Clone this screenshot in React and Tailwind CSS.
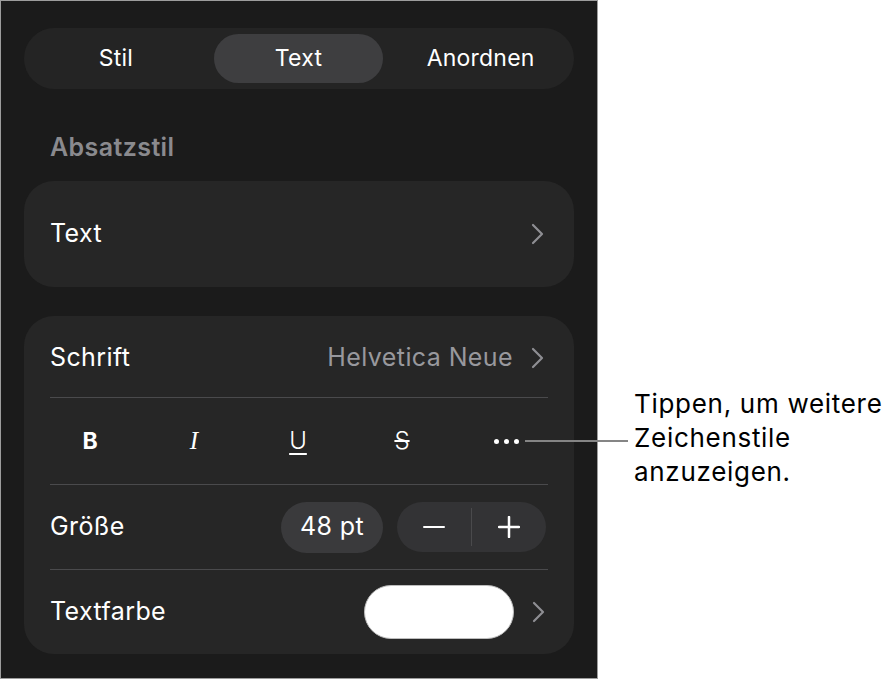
import React from "react";

function Chevron() {
  return (
    <svg width="13" height="22" viewBox="0 0 13 22" fill="none" className="shrink-0">
      <path d="M2 2 L11 11 L2 20" stroke="#8e8e93" strokeWidth="2.2" strokeLinecap="round" strokeLinejoin="round" />
    </svg>
  );
}

function Divider() {
  return <div className="mx-[26px] h-px bg-[#4a4a4c]" />;
}

export default function App() {
  const tabs = [
    { label: "Stil", w: "w-[190px] pr-[6px]" },
    { label: "Text", w: "w-[170px]", active: true },
    { label: "Anordnen", w: "w-[191px] pl-[4px]" },
  ];

  return (
    <div className="relative flex min-h-screen bg-white font-['Inter','Liberation_Sans',sans-serif]">
      {/* format panel */}
      <div className="flex h-[679px] w-[598px] shrink-0 flex-col border border-[#9d9d9d] bg-[#1b1b1b] px-[23px] pt-[27px] text-white">
        <div className="flex h-[61px] items-center rounded-full bg-[#242424]">
          {tabs.map((t) => (
            <div
              key={t.label}
              className={`${t.w} flex h-[49px] items-center justify-center rounded-full text-[23px] tracking-[0.2px] ${
                t.active ? "bg-[#3e3e40]" : ""
              }`}
            >
              {t.label}
            </div>
          ))}
        </div>

        <div className="mt-[44px] h-[28px] pl-[26px] text-[25px] font-semibold leading-[28px] tracking-[0.4px] text-[#8a8a8e]">
          Absatzstil
        </div>

        <div className="mt-[20px] flex h-[106px] items-center justify-between rounded-[30px] bg-[#262626] pl-[26px] pr-[30px] text-[25px] tracking-[0.4px]">
          <span>Text</span>
          <Chevron />
        </div>

        <div className="mt-[29px] flex h-[338px] flex-col rounded-[30px] bg-[#262626] text-[25px] tracking-[0.4px]">
          <div className="flex h-[81px] items-center justify-between pl-[26px] pr-[30px] pt-[2px]">
            <span>Schrift</span>
            <div className="flex items-center gap-[18px]">
              <span className="text-[#98989d]">Helvetica Neue</span>
              <Chevron />
            </div>
          </div>
          <Divider />
          <div className="flex h-[86px] items-center pl-[14px] tracking-normal">
            <div className="flex w-[104px] justify-center text-[23px] font-bold">B</div>
            <div className="flex w-[104px] justify-center font-['Liberation_Serif',serif] text-[25px] italic">I</div>
            <div className="flex w-[104px] justify-center text-[24px] font-light underline decoration-[1.5px] underline-offset-[4px]">
              U
            </div>
            <div className="flex w-[104px] justify-center text-[24px] font-light line-through decoration-[1.5px]">S</div>
            <div className="flex w-[104px] items-center justify-center gap-[5px]">
              <span className="h-[5px] w-[5px] rounded-full bg-white" />
              <span className="h-[5px] w-[5px] rounded-full bg-white" />
              <span className="h-[5px] w-[5px] rounded-full bg-white" />
            </div>
          </div>
          <Divider />
          <div className="flex h-[84px] items-center justify-between pl-[26px] pr-[28px]">
            <span>Größe</span>
            <div className="flex items-center gap-[14px]">
              <div className="flex h-[51px] w-[102px] items-center justify-center rounded-full bg-[#3a3a3c]">48 pt</div>
              <div className="flex h-[50px] w-[149px] items-center rounded-full bg-[#333335]">
                <div className="flex flex-1 items-center justify-center">
                  <span className="h-[2.5px] w-[22px] rounded bg-white" />
                </div>
                <div className="h-[38px] w-px bg-[#4a4a4c]" />
                <div className="flex flex-1 items-center justify-center">
                  <svg width="22" height="22" viewBox="0 0 22 22">
                    <path d="M11 1 V21 M1 11 H21" stroke="white" strokeWidth="2.5" strokeLinecap="round" />
                  </svg>
                </div>
              </div>
            </div>
          </div>
          <Divider />
          <div className="flex h-[84px] items-center justify-between pl-[26px] pr-[29px]">
            <span>Textfarbe</span>
            <div className="flex items-center gap-[18px]">
              <div className="h-[54px] w-[150px] rounded-full border border-[#bdbdbd] bg-white" />
              <Chevron />
            </div>
          </div>
        </div>
      </div>

      {/* callout */}
      <div className="pl-[36px] pt-[387px] text-[26px] leading-[34px] tracking-[0.7px] text-black">
        Tippen, um weitere
        <br />
        Zeichenstile
        <br />
        anzuzeigen.
      </div>
      <div className="absolute left-[525px] top-[440px] h-[2px] w-[103px] bg-[#858585]" />
    </div>
  );
}
